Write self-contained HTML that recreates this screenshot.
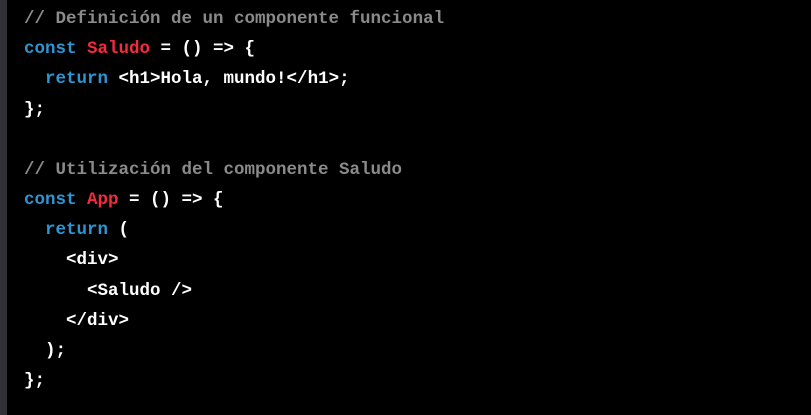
<!DOCTYPE html>
<html><head><meta charset="utf-8"><style>
html,body{margin:0;padding:0;background:#000;width:811px;height:415px;overflow:hidden}
.strip{position:absolute;left:0;top:0;width:7px;height:415px;background:#303036}
pre{position:absolute;left:24px;top:4px;margin:0;font-family:"Liberation Mono",monospace;font-size:17.5px;line-height:30.17px;color:#fff;font-weight:bold}
.c{color:#8a8a8a}.k{color:#2e95d3}.r{color:#f22c3d}
</style></head><body><div class="strip"></div><pre><span class="c">// Definición de un componente funcional</span>
<span class="k">const</span> <span class="r">Saludo</span> = () =&gt; {
  <span class="k">return</span> &lt;h1&gt;Hola, mundo!&lt;/h1&gt;;
};

<span class="c">// Utilización del componente Saludo</span>
<span class="k">const</span> <span class="r">App</span> = () =&gt; {
  <span class="k">return</span> (
    &lt;div&gt;
      &lt;Saludo /&gt;
    &lt;/div&gt;
  );
};</pre></body></html>
